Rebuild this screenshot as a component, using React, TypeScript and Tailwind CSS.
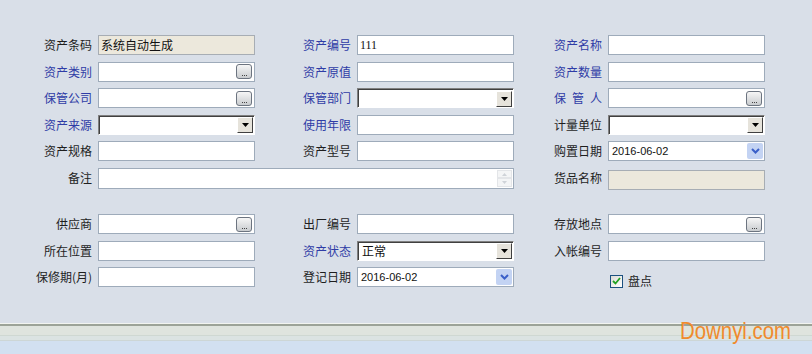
import React from 'react'

const cjk = { fontFamily: '"Noto Sans CJK SC", "Liberation Sans", sans-serif' }

function Label({ text, blue, spread }: { text: string; blue?: boolean; spread?: boolean }) {
  return (
    <div
      className={`flex h-[20px] items-center justify-end whitespace-pre text-[12px] leading-none ${blue ? 'text-[#2f3ca6]' : 'text-[#1e1e1e]'}`}
      style={cjk}
    >
      {spread ? (
        <span className="flex w-[48px] justify-between">
          {text.split('').map((c, i) => (
            <span key={i}>{c}</span>
          ))}
        </span>
      ) : (
        text
      )}
    </div>
  )
}

function TextBox({ value, beige, serif, children }: { value?: string; beige?: boolean; serif?: boolean; children?: React.ReactNode }) {
  return (
    <div
      className={`flex h-[20px] items-center border px-[2px] text-[12px] text-[#111] ${beige ? 'border-[#a7adb4] bg-[#ece8dc]' : 'border-[#9eabba] bg-white'}`}
      style={serif ? { fontFamily: '"Liberation Serif", serif' } : cjk}
    >
      <span className="flex-1 truncate">{value}</span>
      {children}
    </div>
  )
}

function Dots() {
  return (
    <div className="flex h-[15px] w-[16px] items-end justify-center rounded-[3px] border border-[#6c7480] bg-gradient-to-b from-[#f6f6f6] to-[#c9cccf] pb-[1px]">
      <span className="mb-[1px] flex gap-[1px]">
        <span className="h-[1px] w-[1px] bg-[#444]" />
        <span className="h-[1px] w-[1px] bg-[#444]" />
        <span className="h-[1px] w-[1px] bg-[#444]" />
      </span>
    </div>
  )
}

function PickBox() {
  return (
    <TextBox>
      <Dots />
    </TextBox>
  )
}

function SelectBox({ value }: { value?: string }) {
  return (
    <div className="h-[20px] border-t border-l border-[#808080] border-b-white border-r-white border-b border-r">
      <div className="flex h-full items-center border-t border-l border-[#404040] bg-white pl-[3px] text-[12px] text-[#111]" style={cjk}>
        <span className="flex-1 truncate">{value}</span>
        <div className="mr-[1px] flex h-[16px] w-[16px] items-center justify-center border border-t-white border-l-white border-b-[#404040] border-r-[#404040] bg-[#e6e3db]">
          <svg width="7" height="4" viewBox="0 0 7 4">
            <path d="M0 0h7L3.5 4z" fill="#000" />
          </svg>
        </div>
      </div>
    </div>
  )
}

function DateBox({ value }: { value: string }) {
  return (
    <div className="flex h-[20px] items-center border border-[#9eabba] bg-white pl-[3px] pr-[1px] text-[11px] text-[#111]" style={{ fontFamily: '"Liberation Sans", Arial, sans-serif' }}>
      <span className="flex-1">{value}</span>
      <div className="flex h-[16px] w-[16px] items-center justify-center rounded-[2px] bg-[#c3d3f3]">
        <svg width="9" height="6" viewBox="0 0 9 6">
          <path d="M1 1l3.5 3.5L8 1" stroke="#3a5fc8" strokeWidth="2" fill="none" />
        </svg>
      </div>
    </div>
  )
}

function Memo() {
  return (
    <div className="col-span-3 flex h-[21px] border border-[#9eabba] bg-white">
      <div className="flex-1" />
      <div className="flex w-[16px] flex-col justify-between py-[1px] pr-[1px]">
        <div className="flex h-[9px] items-center justify-center border border-[#e3e5e8] bg-[#f4f5f6]">
          <svg width="5" height="3" viewBox="0 0 5 3"><path d="M0 3h5L2.5 0z" fill="#cfd3d8" /></svg>
        </div>
        <div className="flex h-[9px] items-center justify-center border border-[#e3e5e8] bg-[#f4f5f6]">
          <svg width="5" height="3" viewBox="0 0 5 3"><path d="M0 0h5L2.5 3z" fill="#cfd3d8" /></svg>
        </div>
      </div>
    </div>
  )
}

export default function App() {
  return (
    <div className="relative h-[354px] w-full overflow-hidden bg-[#d9dfe8]">
      <div className="pt-[35px]">
        <div className="grid grid-cols-[92px_157px_90px_157px_82px_157px] gap-x-[6px] gap-y-[6.6px]">
          <Label text="资产条码" />
          <TextBox value="系统自动生成" beige />
          <Label text="资产编号" blue />
          <TextBox value="111" serif />
          <Label text="资产名称" blue />
          <TextBox />

          <Label text="资产类别" blue />
          <PickBox />
          <Label text="资产原值" blue />
          <TextBox />
          <Label text="资产数量" blue />
          <TextBox />

          <Label text="保管公司" blue />
          <PickBox />
          <Label text="保管部门" blue />
          <SelectBox />
          <Label text="保管人" blue spread />
          <PickBox />

          <Label text="资产来源" blue />
          <SelectBox />
          <Label text="使用年限" blue />
          <TextBox />
          <Label text="计量单位" />
          <SelectBox />

          <Label text="资产规格" />
          <TextBox />
          <Label text="资产型号" />
          <TextBox />
          <Label text="购置日期" />
          <DateBox value="2016-06-02" />

          <Label text="备注" />
          <Memo />
          <Label text="货品名称" />
          <div className="pt-[2px]">
            <TextBox beige />
          </div>

          <div className="col-span-6 h-[11px]" />

          <Label text="供应商" />
          <PickBox />
          <Label text="出厂编号" />
          <TextBox />
          <Label text="存放地点" />
          <PickBox />

          <Label text="所在位置" />
          <TextBox />
          <Label text="资产状态" blue />
          <SelectBox value="正常" />
          <Label text="入帐编号" />
          <TextBox />

          <Label text="保修期(月)" />
          <TextBox />
          <Label text="登记日期" />
          <DateBox value="2016-06-02" />
          <div />
          <div className="flex h-[20px] items-center gap-[5px] pl-[2px] pt-[8px] text-[12px] text-[#1e1e1e]" style={cjk}>
            <div className="flex h-[13px] w-[13px] items-center justify-center border border-[#1c5180] bg-gradient-to-br from-[#dcdcd6] to-white">
              <svg width="9" height="8" viewBox="0 0 9 8">
                <path d="M1 4l2.5 2.5L8 1" stroke="#21a121" strokeWidth="1.8" fill="none" />
              </svg>
            </div>
            <span>盘点</span>
          </div>
        </div>
      </div>

      <div className="absolute inset-x-0 top-[323px]">
        <div className="h-[1px] bg-[#f2f4f0]" />
        <div className="h-[2px] bg-[#9ca398]" />
        <div className="h-[9px] bg-[#dfe4de]" />
        <div className="h-[1px] bg-[#cfd8d2]" />
        <div className="h-[4px] bg-[#dbe3e2]" />
        <div className="h-[1px] bg-[#cdd6d6]" />
        <div className="h-[20px] bg-[#d2e0f1]" />
      </div>

      <div
        className="absolute left-[680px] top-[319px] origin-left scale-x-[0.85] whitespace-nowrap text-[24px] leading-none text-[#f08a2c]"
        style={{ fontFamily: '"Liberation Sans", Arial, sans-serif' }}
      >
        Downyi.com
      </div>
    </div>
  )
}
